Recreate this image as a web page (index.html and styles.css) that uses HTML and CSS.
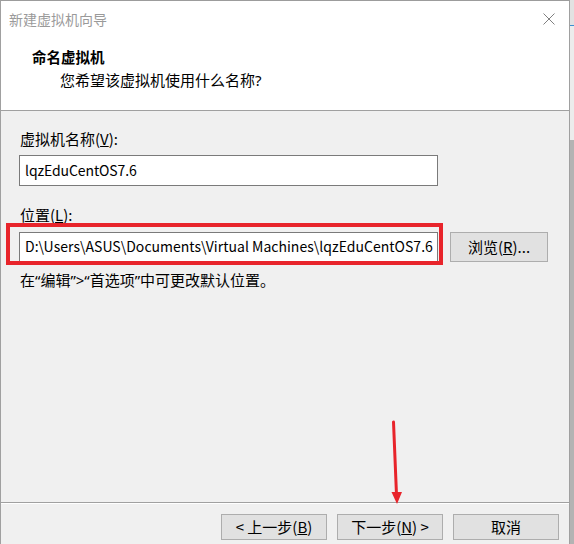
FILE: index.html
```html
<!DOCTYPE html>
<html lang="zh-CN">
<head>
<meta charset="utf-8">
<title>新建虚拟机向导</title>
<link rel="stylesheet" href="styles.css">
</head>
<body>
<div class="screen">
  <div class="dialog">
    <div class="header">
      <div class="titlebar">
        <span class="title">新建虚拟机向导</span>
        <svg class="close" width="12" height="12" viewBox="0 0 12 12"><path d="M0.5 0.5 L11.5 11.5 M11.5 0.5 L0.5 11.5" stroke="#808080" stroke-width="1" fill="none"/></svg>
      </div>
      <div class="heading">命名虚拟机</div>
      <div class="subheading">您希望该虚拟机使用什么名称<span class="latin">?</span></div>
    </div>
    <div class="body">
      <div class="label">虚拟机名称(<u>V</u>):</div>
      <div class="field name-field">lqzEduCentOS7.6</div>
      <div class="label loc-label">位置(<u>L</u>):</div>
      <div class="row">
        <div class="field path-field">D:\Users\ASUS\Documents\Virtual Machines\lqzEduCentOS7.6</div>
        <div class="btn browse">浏览(<u>R</u>)...</div>
      </div>
      <div class="hint">在“编辑”&gt;“首选项”中可更改默认位置。</div>
    </div>
    <div class="footer">
      <div class="btn">&lt; 上一步(<u>B</u>)</div>
      <div class="btn">下一步(<u>N</u>) &gt;</div>
      <div class="btn">取消</div>
    </div>
    <div class="annot-box"></div>
    <svg class="annot-arrow" width="574" height="544" viewBox="0 0 574 544">
      <path d="M393.5 422 L396.5 495" stroke="#e8242b" stroke-width="3" fill="none" stroke-linecap="round"/>
      <path d="M391.5 492 L402 492 L397 504 Z" fill="#e8242b"/>
    </svg>
  </div>
  <div class="side"></div>
</div>
</body>
</html>
```
FILE: styles.css
```css
html, body {
  margin: 0;
  padding: 0;
  overflow: hidden;
}
body {
  font-family: "Noto Sans CJK SC", "Noto Sans", sans-serif;
  font-size: 15px;
  color: #000;
  background: #f0f0f0;
}
.screen {
  display: flex;
  width: 574px;
  height: 544px;
}
.dialog {
  position: relative;
  box-sizing: border-box;
  width: 570px;
  height: 544px;
  border-top: 1px solid #9c9c9c;
  border-left: 1px solid #a0a0a0;
  border-right: 1px solid #a0a0a0;
  display: flex;
  flex-direction: column;
  background: #f0f0f0;
}
.header {
  box-sizing: border-box;
  height: 110px;
  background: #fff;
  border-bottom: 1px solid #a0a0a0;
}
.titlebar {
  height: 35px;
  display: flex;
  align-items: center;
  justify-content: space-between;
  padding: 0 14px 0 8px;
}
.title {
  font-size: 14px;
  color: #9a9a9a;
  line-height: 20px;
}
.close {
  display: block;
}
.heading {
  margin-top: 11px;
  padding-left: 31px;
  font-weight: bold;
  font-size: 14.5px;
  line-height: 20px;
}
.subheading {
  margin-top: 3px;
  padding-left: 59px;
  line-height: 20px;
}
.latin {
  font-family: "Noto Sans", sans-serif;
}
.body {
  flex: 1;
  padding: 18px 0 0 18px;
}
.label {
  line-height: 20px;
  padding-left: 1px;
}
.field {
  box-sizing: border-box;
  width: 419px;
  background: #fff;
  border: 1px solid #7a7a7a;
  padding-left: 5px;
  white-space: nowrap;
  overflow: hidden;
  font-size: 14px;
}
.name-field {
  margin-top: 6px;
  height: 31px;
  line-height: 28px;
  letter-spacing: -0.1px;
}
.loc-label {
  margin-top: 19px;
}
.row {
  margin-top: 7px;
  display: flex;
  gap: 12px;
}
.path-field {
  height: 30px;
  line-height: 27px;
  letter-spacing: 0.02px;
}
.btn {
  box-sizing: border-box;
  width: 106px;
  height: 26px;
  background: #e1e1e1;
  border: 1px solid #adadad;
  text-align: center;
  line-height: 23px;
}
.browse {
  width: 98px;
  height: 30px;
  line-height: 27px;
}
.hint {
  margin-top: 8px;
  line-height: 20px;
  padding-left: 1px;
  font-family: "Noto Sans", "Noto Sans CJK SC", sans-serif;
}
.footer {
  box-sizing: border-box;
  height: 42px;
  border-top: 1px solid #a0a0a0;
  box-shadow: inset 0 1px 0 #fff;
  display: flex;
  justify-content: flex-end;
  gap: 10px;
  padding: 11px 10px 0 0;
}
.annot-box {
  position: absolute;
  left: 5px;
  top: 222px;
  width: 429px;
  height: 34px;
  border: 4px solid #e8242b;
}
.annot-arrow {
  position: absolute;
  left: -1px;
  top: -1px;
  pointer-events: none;
}
.side {
  width: 4px;
  height: 544px;
  background: linear-gradient(to bottom, #e2e2e2 0, #e2e2e2 25px, #3d8fd1 25px, #3d8fd1 26px, #ececec 26px, #ececec 140px, #b3b3b3 140px, #b3b3b3 544px);
}
```
